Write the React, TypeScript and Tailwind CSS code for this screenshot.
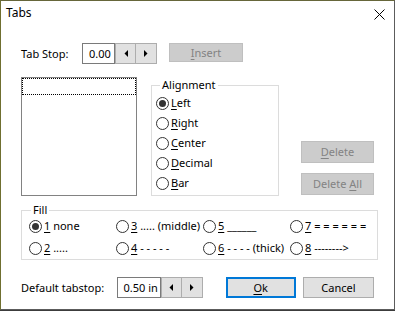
import type { ReactNode } from "react";

const U = ({ children }: { children: ReactNode }) => (
  <span className="underline underline-offset-[2px] decoration-[1px]">{children}</span>
);

function Radio({ checked, children }: { checked?: boolean; children: ReactNode }) {
  return (
    <label className="flex items-center gap-[2px] whitespace-nowrap">
      <span className="flex h-[13px] w-[13px] shrink-0 items-center justify-center rounded-full border border-[#333333] bg-white">
        {checked && <span className="h-[7px] w-[7px] rounded-full bg-[#333333]" />}
      </span>
      <span>{children}</span>
    </label>
  );
}

function Arrow({ dir }: { dir: "left" | "right" }) {
  return (
    <svg width="4" height="7" viewBox="0 0 4 7">
      {dir === "left" ? (
        <polygon points="4,0 4,7 0.5,3.5" fill="#000" />
      ) : (
        <polygon points="0,0 0,7 3.5,3.5" fill="#000" />
      )}
    </svg>
  );
}

function Spin() {
  return (
    <div className="flex h-full">
      <button className="flex w-[21px] items-center justify-center border border-[#adadad] bg-[#e1e1e1]">
        <Arrow dir="left" />
      </button>
      <button className="flex w-[21px] items-center justify-center border border-l-0 border-[#adadad] bg-[#e1e1e1]">
        <Arrow dir="right" />
      </button>
    </div>
  );
}

export default function App() {
  return (
    <div className="h-[311px] w-[395px] bg-[#3c3c3c] font-['Noto_Sans',sans-serif] text-[11px] leading-[16px] text-black">
      <div className="flex h-[310px] flex-col border border-[#5c5c5c] border-l-[#6f6f30] border-t-[#66663a] bg-white">
        {/* Title bar */}
        <div className="flex h-[30px] items-start justify-between pl-[5px] pr-[9px] pt-[4px]">
          <span className="text-[12px]">Tabs</span>
          <svg width="11" height="11" viewBox="0 0 11 11" className="mt-[4px]">
            <path d="M0.5 0.5 L10.5 10.5 M10.5 0.5 L0.5 10.5" stroke="#000" strokeWidth="1" />
          </svg>
        </div>

        <div className="flex flex-col px-[20px]">
          {/* Tab stop row */}
          <div className="mt-[12px] flex h-[21px] items-center">
            <span className="w-[61px]">Tab Stop:</span>
            <div className="flex h-full w-[33px] items-center whitespace-nowrap border border-[#7a7a7a] pl-[6px]">
              0.00
            </div>
            <Spin />
            <button className="ml-[12px] h-[19px] w-[74px] self-start border border-[#bfbfbf] bg-[#cccccc] text-[#838383]">
              <U>I</U>nsert
            </button>
          </div>

          {/* Middle section */}
          <div className="mt-[13px] flex">
            <div className="h-[119px] w-[117px] border border-[#828282] bg-white">
              <div className="h-[17px] border border-dotted border-black" />
            </div>
            <fieldset className="ml-[14px] w-[129px] border border-[#dcdcdc] pb-[2px] pl-[4px]">
              <legend className="ml-[4px] px-[2px]">Alignment</legend>
              <div className="flex flex-col">
                {[
                  ["L", "eft", true],
                  ["R", "ight", false],
                  ["C", "enter", false],
                  ["D", "ecimal", false],
                  ["B", "ar", false],
                ].map(([a, b, c]) => (
                  <div key={String(a)} className="flex h-[20px] items-center">
                    <Radio checked={Boolean(c)}>
                      <U>{a}</U>
                      {b}
                    </Radio>
                  </div>
                ))}
              </div>
            </fieldset>
            <div className="ml-[22px] flex flex-col justify-end gap-[10px] pb-[1px]">
              <button className="h-[22px] w-[73px] border border-[#bfbfbf] bg-[#cccccc] text-[#838383]">
                <U>D</U>elete
              </button>
              <button className="h-[22px] w-[73px] border border-[#bfbfbf] bg-[#cccccc] text-[#838383]">
                Delete <U>A</U>ll
              </button>
            </div>
          </div>

          {/* Fill */}
          <fieldset className="mt-[6px] w-[357px] border border-[#dcdcdc] pl-[7px]">
            <legend className="ml-[2px] px-[2px]">Fill</legend>
            <div className="-mt-[3px] grid grid-cols-[87px_87px_87px_87px]">
              <div className="flex h-[22px] items-center">
                <Radio checked>
                  <U>1</U> none
                </Radio>
              </div>
              <div className="flex h-[22px] items-center">
                <Radio>
                  <U>3</U> ..... (middle)
                </Radio>
              </div>
              <div className="flex h-[22px] items-center">
                <Radio>
                  <U>5</U> ______
                </Radio>
              </div>
              <div className="flex h-[22px] items-center">
                <Radio>
                  <U>7</U> = = = = = =
                </Radio>
              </div>
              <div className="flex h-[22px] items-center">
                <Radio>
                  <U>2</U> .....
                </Radio>
              </div>
              <div className="flex h-[22px] items-center">
                <Radio>
                  <U>4</U> - - - - -
                </Radio>
              </div>
              <div className="flex h-[22px] items-center">
                <Radio>
                  <U>6</U> - - - - (thick)
                </Radio>
              </div>
              <div className="flex h-[22px] items-center">
                <Radio>
                  <U>8</U> --------&gt;
                </Radio>
              </div>
            </div>
          </fieldset>

          {/* Bottom row */}
          <div className="mt-[17px] flex h-[21px] items-center">
            <span className="w-[99px]">Default tabstop:</span>
            <div className="flex h-full w-[44px] items-center whitespace-nowrap border border-[#7a7a7a] pl-[5px]">
              0.50 in
            </div>
            <Spin />
            <button className="ml-[23px] h-[21px] w-[72px] border-2 border-[#0078d7] bg-[#e1e1e1]">
              <U>O</U>k
            </button>
            <button className="ml-[7px] h-[21px] w-[73px] border border-[#adadad] bg-[#e1e1e1]">Cancel</button>
          </div>
        </div>
      </div>
    </div>
  );
}
